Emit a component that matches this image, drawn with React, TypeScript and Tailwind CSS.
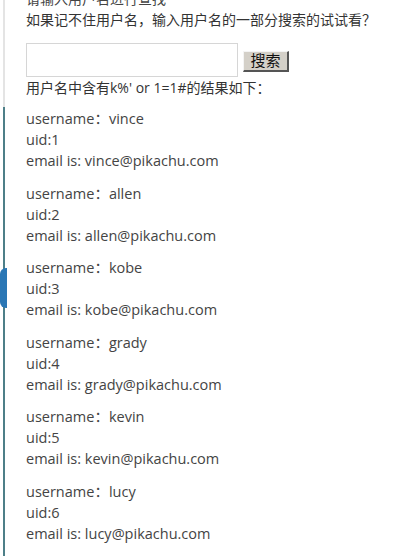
import React from "react";

const users = [
  { name: "vince", uid: 1 },
  { name: "allen", uid: 2 },
  { name: "kobe", uid: 3 },
  { name: "grady", uid: 4 },
  { name: "kevin", uid: 5 },
  { name: "lucy", uid: 6 },
];

export default function App() {
  return (
    <div
      className="w-[410px] h-[556px] overflow-hidden bg-white flex text-[#444]"
      style={{ fontFamily: '"Open Sans", "Noto Sans CJK SC", sans-serif' }}
    >
      <div className="w-[3px] shrink-0" />
      <div className="relative w-[2px] shrink-0 flex flex-col">
        <div className="h-[107px] bg-[#e4e4e4]" />
        <div className="flex-1 bg-[#4d7f88]" />
        <div className="absolute left-[-3px] top-[268px] w-[7px] h-[40px] bg-[#2a77b5] rounded-l-[6px]" />
      </div>
      <div className="pl-[21px] flex flex-col">
        <div className="-mt-[12px] text-[14px] leading-[21px]">请输入用户名进行查找</div>
        <div className="text-[14px] leading-[21px] text-[#333]">如果记不住用户名，输入用户名的一部分搜索的试试看？</div>
        <div className="mt-[13px] flex items-center">
          <div className="w-[212px] h-[34px] border border-[#d6d6d6] bg-white" />
          <div className="ml-[5px] mt-[2px] w-[46px] h-[21px] bg-[#d4d0c8] border-t border-l border-t-[#f4f4f4] border-l-[#f4f4f4] border-b-2 border-r-2 border-b-[#555] border-r-[#555] flex items-center justify-center text-[15px] leading-none text-[#111]">
            搜索
          </div>
        </div>
        <div className="mt-0 text-[14px] leading-[21px] text-[#333]">用户名中含有k%' or 1=1#的结果如下：</div>
        <div className="mt-[10px] flex flex-col gap-[11.5px]">
          {users.map((u) => (
            <div key={u.uid} className="flex flex-col text-[14.5px] leading-[21px] text-[#444]">
              <div>username：{u.name}</div>
              <div>uid:{u.uid}</div>
              <div>email is: {u.name}@pikachu.com</div>
            </div>
          ))}
        </div>
      </div>
    </div>
  );
}
